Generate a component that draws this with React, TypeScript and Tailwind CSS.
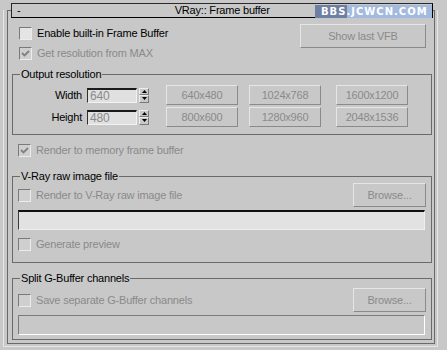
import React from "react";

const BTN =
  "flex items-center justify-center bg-[#c8c8c8] border border-t-[#e6e6e6] border-l-[#e6e6e6] border-b-[#8a8a8a] border-r-[#8a8a8a] text-[#8a8a8a]";

function Check({ checked = false, light = false }: { checked?: boolean; light?: boolean }) {
  return (
    <span
      className={`w-[13px] h-[13px] shrink-0 flex items-center justify-center border border-t-[#7a7a7a] border-l-[#7a7a7a] border-b-[#ececec] border-r-[#ececec] ${
        light ? "bg-[#e4e4e4]" : "bg-[#cfcfcf]"
      }`}
    >
      {checked && (
        <svg width="9" height="9" viewBox="0 0 9 9">
          <path d="M1 4 L3.5 6.5 L8 2" fill="none" stroke="#808080" strokeWidth="1.8" />
        </svg>
      )}
    </span>
  );
}

function CheckRow({
  label,
  checked,
  enabled,
}: {
  label: string;
  checked?: boolean;
  enabled?: boolean;
}) {
  return (
    <div className="flex items-center gap-[5px] h-[13px]">
      <Check checked={checked} light={enabled} />
      <span className={enabled ? "text-black" : "text-[#8a8a8a]"}>{label}</span>
    </div>
  );
}

function Spinner() {
  return (
    <div className="flex flex-col w-[10px] h-[15px]">
      {[0, 1].map((i) => (
        <div
          key={i}
          className="flex-1 flex items-center justify-center bg-[#c8c8c8] border border-t-[#eeeeee] border-l-[#eeeeee] border-b-[#7a7a7a] border-r-[#7a7a7a]"
        >
          <svg width="5" height="3" viewBox="0 0 5 3">
            {i === 0 ? <path d="M2.5 0 L5 3 L0 3 Z" fill="#000" /> : <path d="M0 0 L5 0 L2.5 3 Z" fill="#000" />}
          </svg>
        </div>
      ))}
    </div>
  );
}

function SizeRow({ label, value, a, b, c }: { label: string; value: string; a: string; b: string; c: string }) {
  return (
    <div className="flex items-center h-[20px]">
      <span className="w-[69px] text-right text-black">{label}</span>
      <div className="ml-[5px] w-[50px] h-[15px] flex items-center pl-[2px] bg-[#e0e0e0] border border-t-2 border-t-[#1a1a1a] border-l-[#303030] border-b-[#f2f2f2] border-r-[#f2f2f2] text-[#8a8a8a] text-[12px] leading-none">
        {value}
      </div>
      <div className="ml-[2px]">
        <Spinner />
      </div>
      <div className={`${BTN} ml-[17px] w-[72px] h-[20px]`}>{a}</div>
      <div className={`${BTN} ml-[11px] w-[72px] h-[20px]`}>{b}</div>
      <div className={`${BTN} ml-[15px] w-[72px] h-[20px]`}>{c}</div>
    </div>
  );
}

function Group({ title, children, className = "" }: { title: string; children: React.ReactNode; className?: string }) {
  return (
    <fieldset className={`border border-[#6a6a6a] m-0 p-0 ${className}`}>
      <legend className="ml-[7px] px-[1px] h-[13px] leading-[13px] text-black">{title}</legend>
      {children}
    </fieldset>
  );
}

export default function App() {
  return (
    <div className="relative w-[447px] h-[350px] overflow-hidden bg-[#c8c8c8] pl-[3px] pt-[10px] text-[11px] leading-[13px] tracking-[-0.2px] font-['Liberation_Sans',Arial,sans-serif]">
      {/* rollout frame */}
      <div className="w-[435px] h-[337px] border-l border-r border-b border-[#e6e6e6] pl-[3px] pr-[2px] pb-[2px]">
        <div className="h-full border border-[#6a6a6a] pl-[4px] pr-[2px]">
          {/* top options */}
          <div className="h-[57px] flex justify-between">
            <div className="pt-[16px] pl-[7px] flex flex-col gap-[7px]">
              <CheckRow label="Enable built-in Frame Buffer" enabled />
              <CheckRow label="Get resolution from MAX" checked />
            </div>
            <div className={`${BTN} mt-[13px] mr-[6px] w-[126px] h-[24px]`}>Show last VFB</div>
          </div>

          <Group title="Output resolution">
            <div className="pt-[4px] pb-[7px] flex flex-col gap-[2px]">
              <SizeRow label="Width" value="640" a="640x480" b="1024x768" c="1600x1200" />
              <SizeRow label="Height" value="480" a="800x600" b="1280x960" c="2048x1536" />
            </div>
          </Group>

          <div className="mt-[9px] pl-[6px]">
            <CheckRow label="Render to memory frame buffer" checked />
          </div>

          <Group title="V-Ray raw image file" className="mt-[13px]">
            <div className="pl-[5px] pr-[5px] pb-[11px]">
              <div className="h-[24px] flex items-center justify-between">
                <CheckRow label="Render to V-Ray raw image file" />
                <div className={`${BTN} w-[73px] h-[24px]`}>Browse...</div>
              </div>
              <div className="mt-[3px] w-[407px] h-[20px] bg-[#e2e2e2] border border-t-2 border-t-[#111111] border-l-[#3a3a3a] border-b-[#efefef] border-r-[#efefef]" />
              <div className="mt-[8px]">
                <CheckRow label="Generate preview" />
              </div>
            </div>
          </Group>

          <Group title="Split G-Buffer channels" className="mt-[9px]">
            <div className="pl-[5px] pr-[5px] pt-[3px] pb-[4px]">
              <div className="h-[24px] flex items-center justify-between">
                <CheckRow label="Save separate G-Buffer channels" />
                <div className={`${BTN} w-[73px] h-[24px]`}>Browse...</div>
              </div>
              <div className="mt-[3px] w-[407px] h-[20px] bg-[#c8c8c8] border border-t-[#7a7a7a] border-l-[#7a7a7a] border-b-white border-r-white" />
            </div>
          </Group>
        </div>
      </div>

      {/* rollout title bar */}
      <div className="absolute left-[11px] top-[3px] w-[422px] h-[15px] flex items-center bg-[#c8c8c8] border border-[#2a2a2a] border-b-black border-r-black">
        <span className="pl-[5px] text-black">-</span>
        <span className="flex-1 text-center text-black pr-[8px]">VRay:: Frame buffer</span>
      </div>

      {/* watermark */}
      <div className="absolute left-[315px] top-[5px] w-[117px] h-[13px] flex bg-[#a3badf]">
        <div className="w-[32px] h-full bg-[#6f7fa3]" />
        <span className="absolute left-[6px] top-0 leading-[13px] text-[10px] font-bold tracking-[1px] text-white font-['DejaVu_Sans',sans-serif]">
          BBS.JCWCN.COM
        </span>
      </div>
    </div>
  );
}
